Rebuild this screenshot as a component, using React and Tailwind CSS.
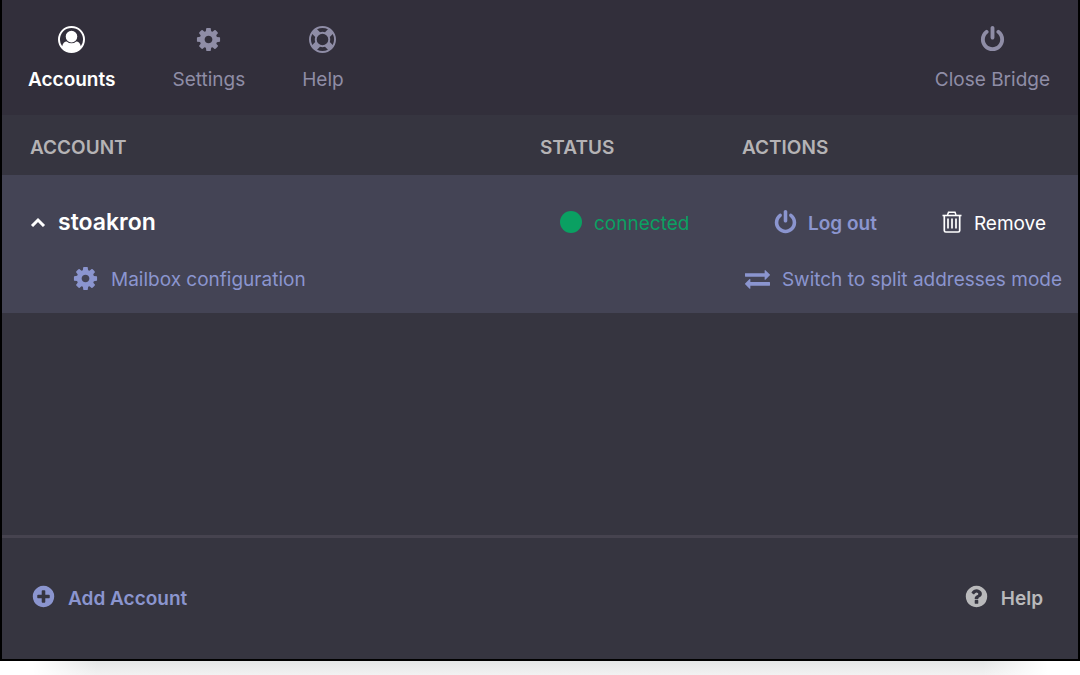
import { useState } from 'react';

// 1792-unit glyphs shared by the nav, the account rows and the footer
const ICONS = {
  user: 'M896 0q182 0 348 71t286 191 191 286 71 348q0 181-70.5 347t-190.5 286-286 191.5-349 71.5-349-71-285.5-191.5-190.5-286-71-347.5 71-348 191-286 286-191 348-71zm619 1351q149-205 149-455 0-156-61-298t-164-245-245-164-298-61-298 61-245 164-164 245-61 298q0 250 149 455 66-327 306-327 131 128 313 128t313-128q240 0 306 327zm-235-647q0-159-112.5-271.5t-271.5-112.5-271.5 112.5-112.5 271.5 112.5 271.5 271.5 112.5 271.5-112.5 112.5-271.5z',
  cog: 'M1152 896q0-106-75-181t-181-75-181 75-75 181 75 181 181 75 181-75 75-181zm512-109v222q0 12-8 23t-20 13l-185 28q-19 54-39 91 35 50 107 138 10 12 10 25t-9 23q-27 37-99 108t-94 71q-12 0-26-9l-138-108q-44 23-91 38-16 136-29 186-7 28-36 28h-222q-14 0-24.5-8.5t-11.5-21.5l-28-184q-49-16-90-37l-141 107q-10 9-25 9-14 0-25-11-126-114-165-168-7-10-7-23 0-12 8-23 15-21 51-66.5t54-70.5q-27-50-41-99l-183-27q-13-2-21-12.5t-8-23.5v-222q0-12 8-23t19-13l186-28q14-46 39-92-40-57-107-138-10-12-10-24 0-10 9-23 26-36 98.5-107.5t94.5-71.5q13 0 26 10l138 107q44-23 91-38 16-136 29-186 7-28 36-28h222q14 0 24.5 8.5t11.5 21.5l28 184q49 16 90 37l142-107q9-9 24-9 13 0 25 10 129 119 165 170 7 8 7 22 0 12-8 23-15 21-51 66.5t-54 70.5q26 50 41 98l183 28q13 2 21 12.5t8 23.5z',
  ring: 'M896 0q182 0 348 71t286 191 191 286 71 348-71 348-191 286-286 191-348 71-348-71-286-191-191-286-71-348 71-348 191-286 286-191 348-71zm0 128q-190 0-361 90l194 194q82-28 167-28t167 28l194-194q-171-90-361-90zm-678 1129l194-194q-28-82-28-167t28-167l-194-194q-90 171-90 361t90 361zm678 407q190 0 361-90l-194-194q-82 28-167 28t-167-28l-194 194q171 90 361 90zm0-384q159 0 271.5-112.5t112.5-271.5-112.5-271.5-271.5-112.5-271.5 112.5-112.5 271.5 112.5 271.5 271.5 112.5zm484-217l194 194q90-171 90-361t-90-361l-194 194q28 82 28 167t-28 167z',
  power: 'M1664 896q0 156-61 298t-164 245-245 164-298 61-298-61-245-164-164-245-61-298q0-182 80.5-343t226.5-270q43-32 95.5-25t83.5 50q32 42 24.5 94.5t-49.5 84.5q-98 74-151.5 181t-53.5 228q0 104 40.5 198.5t109.5 163.5 163.5 109.5 198.5 40.5 198.5-40.5 163.5-109.5 109.5-163.5 40.5-198.5q0-121-53.5-228t-151.5-181q-42-32-49.5-84.5t24.5-94.5q31-43 84-50t95 25q146 109 226.5 270t80.5 343zm-640-768v640q0 52-38 90t-90 38-90-38-38-90v-640q0-52 38-90t90-38 90 38 38 90z',
  exchange: 'M1792 1184v192q0 13-9.5 22.5t-22.5 9.5h-1376v192q0 13-9.5 22.5t-22.5 9.5q-12 0-24-10l-319-320q-9-9-9-22 0-14 9-23l320-320q9-9 23-9 13 0 22.5 9.5t9.5 22.5v192h1376q13 0 22.5 9.5t9.5 22.5zm0-544q0 14-9 23l-320 320q-9 9-23 9-13 0-22.5-9.5t-9.5-22.5v-192h-1376q-13 0-22.5-9.5t-9.5-22.5v-192q0-13 9.5-22.5t22.5-9.5h1376v-192q0-14 9-23t23-9q12 0 24 10l319 319q9 9 9 23z',
  plus: 'M1344 960v-128q0-26-19-45t-45-19h-256v-256q0-26-19-45t-45-19h-128q-26 0-45 19t-19 45v256h-256q-26 0-45 19t-19 45v128q0 26 19 45t45 19h256v256q0 26 19 45t45 19h128q26 0 45-19t19-45v-256h256q26 0 45-19t19-45zm320-64q0 209-103 385.5t-279.5 279.5-385.5 103-385.5-103-279.5-279.5-103-385.5 103-385.5 279.5-279.5 385.5-103 385.5 103 279.5 279.5 103 385.5z',
  question: 'M1024 1376v-192q0-14-9-23t-23-9h-192q-14 0-23 9t-9 23v192q0 14 9 23t23 9h192q14 0 23-9t9-23zm256-672q0-88-55.5-163t-138.5-116-170-41q-243 0-371 213-15 24 8 42l132 100q7 6 19 6 16 0 25-12 53-68 86-92 34-24 86-24 48 0 85.5 26t37.5 59q0 38-20 61t-68 45q-63 28-115.5 86.5t-52.5 125.5v36q0 14 9 23t23 9h192q14 0 23-9t9-23q0-19 21.5-49.5t54.5-49.5q32-18 49-28.5t46-35 44.5-48 28-60.5 12.5-81zm384 192q0 209-103 385.5t-279.5 279.5-385.5 103-385.5-103-279.5-279.5-103-385.5 103-385.5 279.5-279.5 385.5-103 385.5 103 279.5 279.5 103 385.5z',
};

const TABS = [
  { id: 'accounts', label: 'Accounts', icon: 'user' },
  { id: 'settings', label: 'Settings', icon: 'cog' },
  { id: 'help', label: 'Help', icon: 'ring' },
];

function Icon({ name, className }) {
  return (
    <svg viewBox="0 0 1792 1792" className={`shrink-0 ${className}`} fill="currentColor" aria-hidden="true">
      <path d={ICONS[name]} />
    </svg>
  );
}

function TrashIcon() {
  return (
    <svg viewBox="0 0 20 22" className="mb-1 h-[22px] w-5 shrink-0" fill="none" stroke="currentColor" aria-hidden="true">
      <path d="M0.500 4.500H19.500" strokeWidth="1.600" />
      <path d="M5.500 4L6.500 1.300H13L14 4" strokeWidth="1.500" />
      <path d="M2.300 4.500V19.500Q2.300 21 3.800 21H16.200Q17.700 21 17.700 19.500V4.500" strokeWidth="1.700" />
      <path d="M6 7.500V17.500M10 7.500V17.500M14 7.500V17.500" strokeWidth="1.700" />
    </svg>
  );
}

function NavButton({ icon, label, active, onClick }) {
  return (
    <button
      onClick={onClick}
      className={`flex flex-col items-center gap-[13px] ${active ? 'font-semibold text-white' : 'text-[#8f8da6]'}`}
    >
      <Icon name={icon} className="size-[27px]" />
      {label}
    </button>
  );
}

function AccountRows({ name }) {
  const [open, setOpen] = useState(true);

  return (
    <tbody className="bg-[#444455]">
      <tr className="h-[82px]">
        <td className="pt-3 pl-7">
          <button
            onClick={() => setOpen(!open)}
            aria-expanded={open}
            className="flex items-center gap-3 text-[23px] font-semibold text-white"
          >
            <svg viewBox="0 0 16 10" className={`h-[10px] w-4 ${open ? '' : 'rotate-180'}`} fill="none" stroke="currentColor" strokeWidth="3" aria-hidden="true">
              <path d="M2 9L8 3L14 9" />
            </svg>
            {name}
          </button>
        </td>
        <td className="pt-4 pl-5">
          <div className="flex items-center gap-3 text-[#0aa062]">
            <span className="mb-1 size-[22px] rounded-full bg-[#0aa062]" />
            connected
          </div>
        </td>
        <td className="pt-4 pr-8">
          <div className="flex items-center justify-between pl-[31px]">
            <button className="flex items-center gap-2.5 font-semibold text-[#8b95cf]">
              <Icon name="power" className="mb-1 size-[25px]" />
              Log out
            </button>
            <button className="flex items-center gap-3 text-white">
              <TrashIcon />
              Remove
            </button>
          </div>
        </td>
      </tr>
      {open && (
        <tr className="h-14 text-[#8b95cf]">
          <td className="pb-2.5 pl-[70px]">
            <button className="flex items-center gap-3">
              <Icon name="cog" className="mb-1 size-[27px]" />
              Mailbox configuration
            </button>
          </td>
          <td colSpan={2} className="pr-4 pb-2.5">
            <button className="ml-auto flex items-center gap-3">
              <Icon name="exchange" className="mb-1 size-[25px]" />
              Switch to split addresses mode
            </button>
          </td>
        </tr>
      )}
    </tbody>
  );
}

function App() {
  const [tab, setTab] = useState('accounts');

  return (
    <div className="flex min-h-screen flex-col bg-white font-[Inter,sans-serif] text-[19px] leading-7">
      <div className="flex grow flex-col border-x-2 border-b-2 border-black bg-[#363540]">
        <header className="flex justify-between bg-[#322f3b] pt-[26px] pr-7 pb-[21px] pl-[26px]">
          <nav className="flex gap-[57px]">
            {TABS.map((t) => (
              <NavButton key={t.id} icon={t.icon} label={t.label} active={tab === t.id} onClick={() => setTab(t.id)} />
            ))}
          </nav>
          <NavButton icon="power" label="Close Bridge" />
        </header>

        <main className="grow">
          <table className="w-full table-fixed text-left">
            <thead>
              <tr className="h-[60px] text-[#b5b3b5]">
                <th className="w-1/2 pt-1.5 pl-7 font-semibold">ACCOUNT</th>
                <th className="w-[202px] pt-1.5 font-semibold">STATUS</th>
                <th className="pt-1.5 font-semibold">ACTIONS</th>
              </tr>
            </thead>
            <AccountRows name="stoakron" />
          </table>
        </main>

        <footer className="flex items-center justify-between border-t-3 border-[#46434f] pt-[46px] pr-[35px] pb-[46px] pl-[29px] font-semibold">
          <button className="flex items-center gap-3 text-[#8b95cf]">
            <Icon name="plus" className="mb-1 size-[25px]" />
            Add Account
          </button>
          <button className="flex items-center gap-3 text-[#b9b9bb]">
            <Icon name="question" className="mb-1 size-[25px]" />
            Help
          </button>
        </footer>
      </div>
      {/* window shadow, fading out towards both corners */}
      <div className="h-3.5 bg-[linear-gradient(to_right,white_3%,transparent_9%,transparent_91%,white_97%),linear-gradient(#e4e6e6,#f2f2f2)]" />
    </div>
  );
}

export default App;
